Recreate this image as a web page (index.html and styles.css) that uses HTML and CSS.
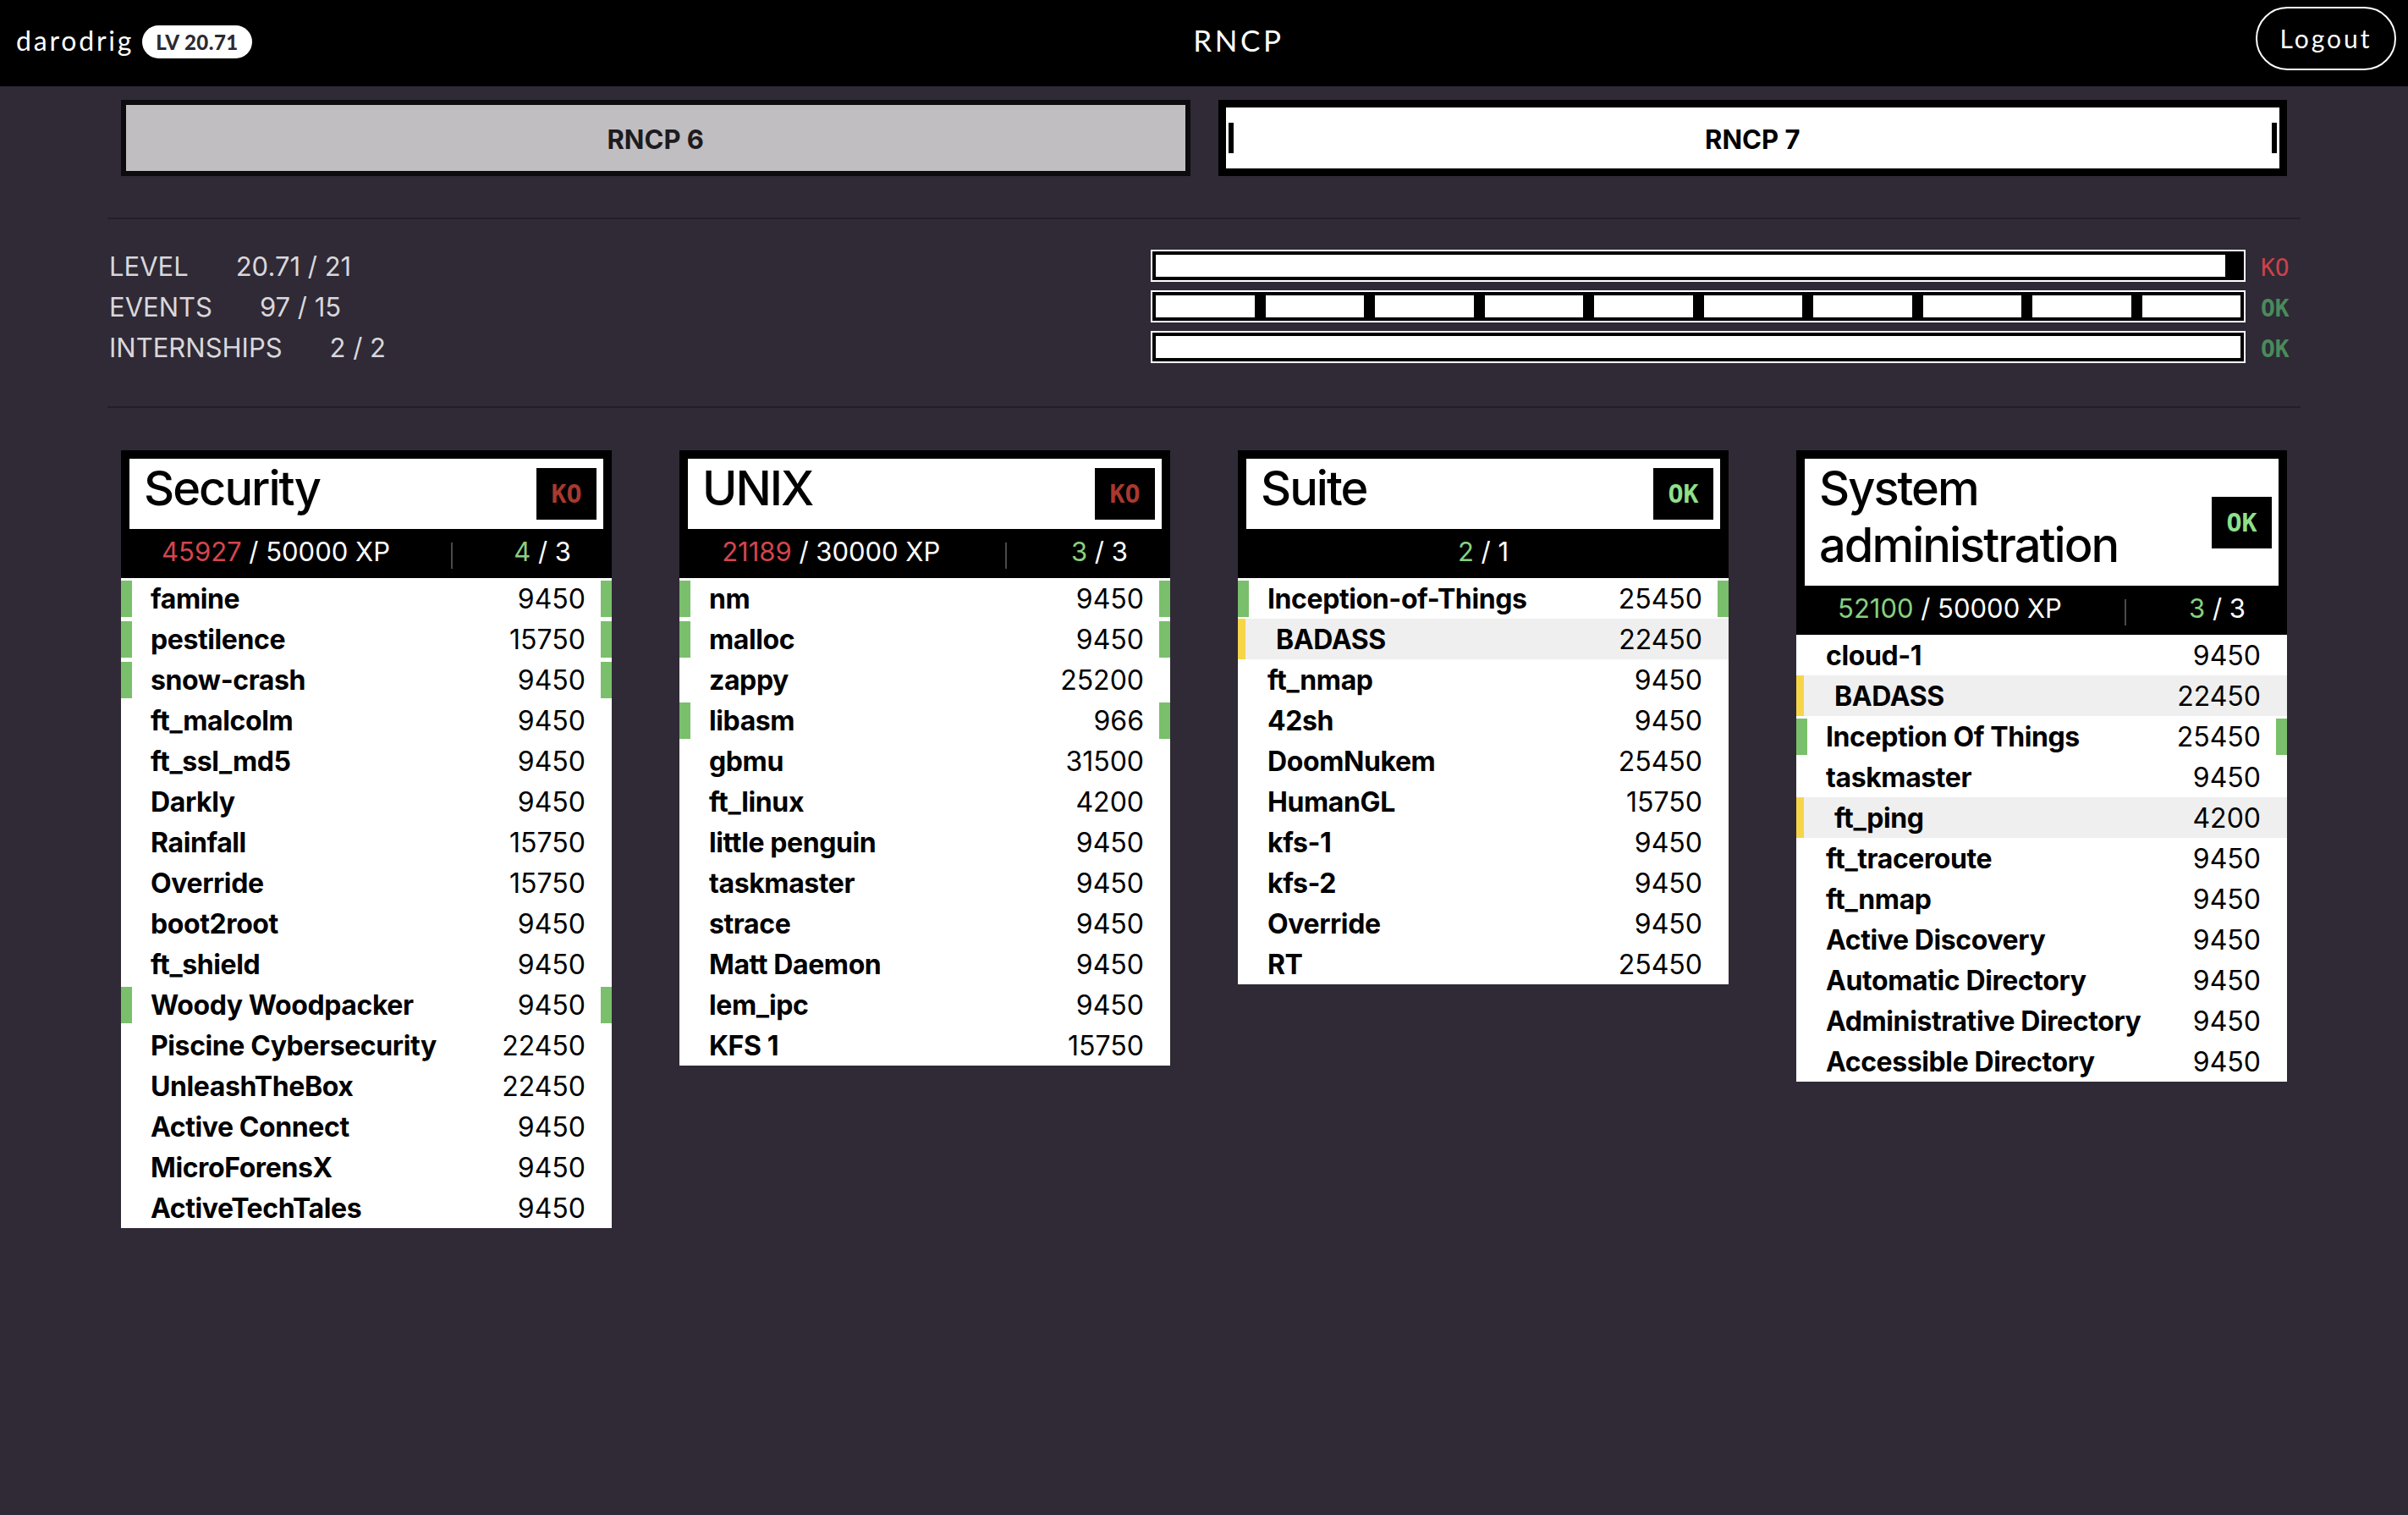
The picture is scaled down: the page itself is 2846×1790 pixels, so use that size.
FILE: index.html
```html
<!DOCTYPE html>
<html lang="en">
<head>
<meta charset="utf-8">
<title>RNCP</title>
<link rel="stylesheet" href="styles.css">
</head>
<body>
<header class="topbar">
  <div class="user">
    <span class="login">darodrig</span>
    <span class="level-badge">LV 20.71</span>
  </div>
  <div class="page-title">RNCP</div>
  <button class="logout">Logout</button>
</header>

<main class="container">
  <nav class="tabs">
    <div class="tab">RNCP 6</div>
    <div class="tab active">RNCP 7</div>
  </nav>

  <section class="stats">
    <div class="stat-row">
      <div class="stat-text"><span class="stat-name">LEVEL</span><span class="stat-value">20.71 / 21</span></div>
      <div class="bar"><div class="fill" style="width:98.6%"></div></div>
      <div class="status ko">KO</div>
    </div>
    <div class="stat-row">
      <div class="stat-text"><span class="stat-name">EVENTS</span><span class="stat-value">97 / 15</span></div>
      <div class="bar segmented">
        <i></i><i></i><i></i><i></i><i></i><i></i><i></i><i></i><i></i><i></i>
      </div>
      <div class="status ok">OK</div>
    </div>
    <div class="stat-row">
      <div class="stat-text"><span class="stat-name">INTERNSHIPS</span><span class="stat-value">2 / 2</span></div>
      <div class="bar"><div class="fill" style="width:100%"></div></div>
      <div class="status ok">OK</div>
    </div>
  </section>

  <section class="cards">
    <article class="card">
      <div class="card-head">
        <h2>Security</h2>
        <span class="badge ko">KO</span>
      </div>
      <div class="card-meta">
        <span><span class="red">45927</span> / 50000 XP</span>
        <span class="sep"></span>
        <span><span class="green">4</span> / 3</span>
      </div>
      <ul class="projects">
        <li class="done"><span class="name">famine</span><span class="xp">9450</span></li>
        <li class="done"><span class="name">pestilence</span><span class="xp">15750</span></li>
        <li class="done"><span class="name">snow-crash</span><span class="xp">9450</span></li>
        <li><span class="name">ft_malcolm</span><span class="xp">9450</span></li>
        <li><span class="name">ft_ssl_md5</span><span class="xp">9450</span></li>
        <li><span class="name">Darkly</span><span class="xp">9450</span></li>
        <li><span class="name">Rainfall</span><span class="xp">15750</span></li>
        <li><span class="name">Override</span><span class="xp">15750</span></li>
        <li><span class="name">boot2root</span><span class="xp">9450</span></li>
        <li><span class="name">ft_shield</span><span class="xp">9450</span></li>
        <li class="done"><span class="name">Woody Woodpacker</span><span class="xp">9450</span></li>
        <li><span class="name">Piscine Cybersecurity</span><span class="xp">22450</span></li>
        <li><span class="name">UnleashTheBox</span><span class="xp">22450</span></li>
        <li><span class="name">Active Connect</span><span class="xp">9450</span></li>
        <li><span class="name">MicroForensX</span><span class="xp">9450</span></li>
        <li><span class="name">ActiveTechTales</span><span class="xp">9450</span></li>
      </ul>
    </article>

    <article class="card">
      <div class="card-head">
        <h2>UNIX</h2>
        <span class="badge ko">KO</span>
      </div>
      <div class="card-meta">
        <span><span class="red">21189</span> / 30000 XP</span>
        <span class="sep"></span>
        <span><span class="green">3</span> / 3</span>
      </div>
      <ul class="projects">
        <li class="done"><span class="name">nm</span><span class="xp">9450</span></li>
        <li class="done"><span class="name">malloc</span><span class="xp">9450</span></li>
        <li><span class="name">zappy</span><span class="xp">25200</span></li>
        <li class="done"><span class="name">libasm</span><span class="xp">966</span></li>
        <li><span class="name">gbmu</span><span class="xp">31500</span></li>
        <li><span class="name">ft_linux</span><span class="xp">4200</span></li>
        <li><span class="name">little penguin</span><span class="xp">9450</span></li>
        <li><span class="name">taskmaster</span><span class="xp">9450</span></li>
        <li><span class="name">strace</span><span class="xp">9450</span></li>
        <li><span class="name">Matt Daemon</span><span class="xp">9450</span></li>
        <li><span class="name">lem_ipc</span><span class="xp">9450</span></li>
        <li><span class="name">KFS 1</span><span class="xp">15750</span></li>
      </ul>
    </article>

    <article class="card">
      <div class="card-head">
        <h2>Suite</h2>
        <span class="badge ok">OK</span>
      </div>
      <div class="card-meta single">
        <span><span class="green">2</span> / 1</span>
      </div>
      <ul class="projects">
        <li class="done"><span class="name">Inception-of-Things</span><span class="xp">25450</span></li>
        <li class="progress"><span class="name">BADASS</span><span class="xp">22450</span></li>
        <li><span class="name">ft_nmap</span><span class="xp">9450</span></li>
        <li><span class="name">42sh</span><span class="xp">9450</span></li>
        <li><span class="name">DoomNukem</span><span class="xp">25450</span></li>
        <li><span class="name">HumanGL</span><span class="xp">15750</span></li>
        <li><span class="name">kfs-1</span><span class="xp">9450</span></li>
        <li><span class="name">kfs-2</span><span class="xp">9450</span></li>
        <li><span class="name">Override</span><span class="xp">9450</span></li>
        <li><span class="name">RT</span><span class="xp">25450</span></li>
      </ul>
    </article>

    <article class="card">
      <div class="card-head">
        <h2>System administration</h2>
        <span class="badge ok">OK</span>
      </div>
      <div class="card-meta">
        <span><span class="green">52100</span> / 50000 XP</span>
        <span class="sep"></span>
        <span><span class="green">3</span> / 3</span>
      </div>
      <ul class="projects">
        <li><span class="name">cloud-1</span><span class="xp">9450</span></li>
        <li class="progress"><span class="name">BADASS</span><span class="xp">22450</span></li>
        <li class="done"><span class="name">Inception Of Things</span><span class="xp">25450</span></li>
        <li><span class="name">taskmaster</span><span class="xp">9450</span></li>
        <li class="progress"><span class="name">ft_ping</span><span class="xp">4200</span></li>
        <li><span class="name">ft_traceroute</span><span class="xp">9450</span></li>
        <li><span class="name">ft_nmap</span><span class="xp">9450</span></li>
        <li><span class="name">Active Discovery</span><span class="xp">9450</span></li>
        <li><span class="name">Automatic Directory</span><span class="xp">9450</span></li>
        <li><span class="name">Administrative Directory</span><span class="xp">9450</span></li>
        <li><span class="name">Accessible Directory</span><span class="xp">9450</span></li>
      </ul>
    </article>
  </section>
</main>
</body>
</html>
```

FILE: styles.css
```css
* { box-sizing: border-box; }

body {
  margin: 0;
  background: #2f2a36;
  font-family: Inter, "Noto Sans", sans-serif;
  color: #fff;
}

/* ---------- top bar ---------- */
.topbar {
  height: 102px;
  background: #000;
  display: flex;
  align-items: center;
  justify-content: space-between;
  padding: 0 14px 8px 19px;
  font-family: Lato, "Open Sans", sans-serif;
}
.user { display: flex; align-items: center; gap: 10px; }
.login {
  font-size: 32px;
  letter-spacing: 2.8px;
  color: #fff;
}
.level-badge {
  display: inline-flex;
  align-items: center;
  height: 39px;
  margin-top: 4px;
  padding: 0 16px;
  border-radius: 20px;
  background: #fff;
  color: #2b2a30;
  font-weight: 900;
  font-size: 24px;
  letter-spacing: 0.5px;
}
.page-title {
  font-size: 35px;
  letter-spacing: 3.5px;
  color: #fff;
  margin-right: 36px;
}
.logout {
  width: 166px;
  height: 75px;
  margin-bottom: 4px;
  border: 2px solid #fff;
  border-radius: 38px;
  background: transparent;
  color: #fff;
  font-family: Lato, "Open Sans", sans-serif;
  font-size: 30px;
  letter-spacing: 3px;
  padding: 0;
}

/* ---------- container ---------- */
.container {
  width: 2560px;
  margin: 16px auto 0;
}

.tabs {
  display: grid;
  grid-template-columns: 1fr 1fr;
  gap: 33px;
}
.tab {
  height: 90px;
  padding-top: 2px;
  display: flex;
  align-items: center;
  justify-content: center;
  font-weight: 700;
  font-size: 31px;
  color: #1d1b20;
  background: #c0bec1;
  border: 6px solid #0d0b0e;
}
.tab.active {
  position: relative;
  background: #fff;
  color: #000;
  border: 9px solid #000;
}
.tab.active::before,
.tab.active::after {
  content: "";
  position: absolute;
  top: 18px;
  width: 6px;
  height: 36px;
  background: #000;
}
.tab.active::before { left: 3px; }
.tab.active::after { right: 3px; }

/* ---------- stats ---------- */
.stats {
  margin: 49px -16px 0;
  padding: 31px 13px 46px 2px;
  border-top: 2px solid #221d28;
  border-bottom: 2px solid #221d28;
}
.stat-row {
  height: 48px;
  display: flex;
  align-items: center;
}
.stat-text {
  flex: 1;
  font-size: 31px;
  color: #d9d7db;
}
.stat-value { margin-left: 56px; }
.bar {
  width: 1294px;
  height: 38px;
  border: 2px solid #fff;
  background: #000;
  padding: 4px;
  display: flex;
}
.fill { height: 100%; background: #fff; }
.bar.segmented { gap: 13px; }
.bar.segmented i { flex: 1; background: #fff; }
.status {
  width: 34px;
  margin-left: 18px;
  padding-top: 6px;
  font-family: "DejaVu Sans Mono", monospace;
  font-size: 28px;
  line-height: 1;
}
.status.ko { color: #c9434b; }
.status.ok { color: #4a8a5b; font-weight: 700; }

/* ---------- cards ---------- */
.cards {
  margin-top: 50px;
  display: grid;
  grid-template-columns: repeat(4, 580px);
  gap: 80px;
  align-items: start;
  padding-bottom: 40px;
}
.card { background: #000; }
.card-head {
  margin: 10px 10px 0;
  background: #fff;
  display: flex;
  align-items: center;
  justify-content: space-between;
  padding: 0 8px 0 17px;
}
.card-head h2 {
  margin: 0;
  padding: 2px 0 14px;
  font-size: 56px;
  line-height: 67px;
  font-weight: 500;
  letter-spacing: -2px;
  color: #000;
}
.badge {
  flex: none;
  width: 71px;
  height: 61px;
  background: #000;
  display: flex;
  align-items: center;
  justify-content: center;
  font-family: "DejaVu Sans Mono", monospace;
  font-weight: 700;
  font-size: 30px;
}
.badge.ko { color: #a8392f; }
.badge.ok { color: #8ee08a; }

.card-meta {
  height: 58px;
  padding: 0 12px 5px;
  display: flex;
  align-items: center;
  justify-content: space-around;
  font-size: 31px;
  color: #fff;
}
.card-meta.single { justify-content: center; }
.card-meta .sep {
  width: 2px;
  height: 31px;
  background: #4a4a4a;
  margin-top: 10px;
}
.red { color: #d4454d; }
.green { color: #88d07f; }

.projects {
  list-style: none;
  margin: 0;
  padding: 0;
  background: #fff;
  color: #000;
}
.projects li {
  position: relative;
  height: 48px;
  display: flex;
  align-items: center;
  justify-content: space-between;
  padding: 0 31px 0 35px;
  font-size: 32px;
}
.projects .name { font-weight: 700; letter-spacing: -0.4px; }
.projects .xp { font-weight: 400; }
.projects li.done::before,
.projects li.done::after {
  content: "";
  position: absolute;
  top: 3px;
  bottom: 2px;
  width: 13px;
  background: #7abf6b;
}
.projects li.done::before { left: 0; }
.projects li.done::after { right: 0; }
.projects li.progress { background: #efefef; }
.projects li.progress .name { padding-left: 10px; }
.projects li.progress::before {
  content: "";
  position: absolute;
  left: 0;
  top: 0;
  bottom: 0;
  width: 9px;
  background: #f6d548;
}
```
